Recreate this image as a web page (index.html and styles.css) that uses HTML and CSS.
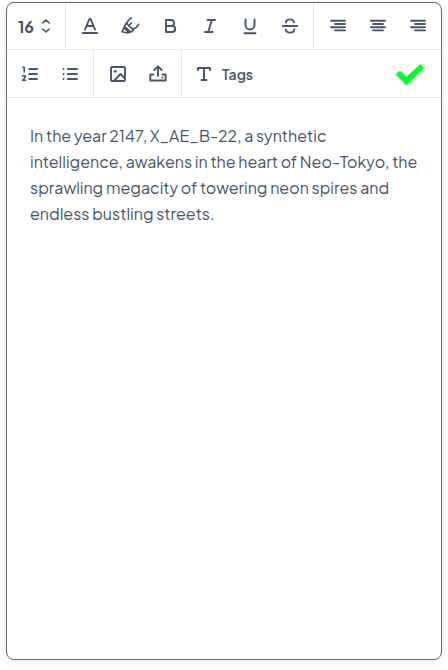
FILE: index.html
```html
<!DOCTYPE html>
<html lang="en">
<head>
<meta charset="utf-8">
<meta name="viewport" content="width=device-width, initial-scale=1">
<title>Text editor</title>
<link rel="stylesheet" href="styles.css">
</head>
<body>
<main class="editor">
  <div class="toolbar" role="toolbar" aria-label="Text style">
    <div class="size">
      <select class="size-select" aria-label="Font size">
        <option>14</option>
        <option selected>16</option>
        <option>18</option>
      </select>
      <svg class="size-arrows" viewBox="0 0 10 16" aria-hidden="true"><path d="M1.700 5L5 2.200 8.300 5M1.700 11L5 13.800 8.300 11"/></svg>
    </div>
    <div class="group">
      <button class="tool" type="button" aria-label="Text color"><svg class="icon" viewBox="0 0 20 20"><path d="M5 13.500L9.400 3h1.200L15 13.500M6.500 10h7M2.800 17h14.400"/></svg></button>
      <button class="tool" type="button" aria-label="Highlight"><svg class="icon fine" viewBox="0 0 20 20"><path d="M11.300 1.800C9.300 3 7.800 4.800 7 7.500M18.600 8.300c-1.200 2.400-3 4-5.400 4.700M6 7l7.600 7.200M6 7l-1.500 3.300 6.300 5.700 2.800-1.800M4.500 10.300L2 15.800l5.600 1.200 3.200-1M4.800 12.500l3.500 3.300M8.800 9.800l2.600-3"/></svg></button>
      <button class="tool" type="button" aria-label="Bold"><svg class="icon" viewBox="0 0 20 20"><path d="M6 4h5a3 3 0 0 1 0 6H6zM6 10h6.200a3 3 0 0 1 0 6H6z"/></svg></button>
      <button class="tool" type="button" aria-label="Italic"><svg class="icon" viewBox="0 0 20 20"><path d="M7.500 4h7.500M5 16h7.500M11.800 4L8.200 16"/></svg></button>
      <button class="tool" type="button" aria-label="Underline"><svg class="icon" viewBox="0 0 20 20"><path d="M5.500 3.500V9a4.500 4.500 0 0 0 9 0V3.500M4.500 17.300h11"/></svg></button>
      <button class="tool" type="button" aria-label="Strikethrough"><svg class="icon" viewBox="0 0 20 20"><path d="M2.800 10h14.400M14 6.200C13.600 4.400 12 3.400 10 3.400c-2.400 0-4.100 1.300-4.100 3.200M5.700 13.400c.3 2 2 3.200 4.300 3.200 2.600 0 4.300-1.300 4.300-3.300"/></svg></button>
    </div>
    <div class="group last">
      <button class="tool" type="button" aria-label="Align right"><svg class="icon" viewBox="0 0 20 20"><path d="M3 4.800h14M7 8h10M3 11.200h14M7 14.400h10"/></svg></button>
      <button class="tool" type="button" aria-label="Align center"><svg class="icon" viewBox="0 0 20 20"><path d="M3 4.800h14M5 8h10M3 11.200h14M5 14.400h10"/></svg></button>
      <button class="tool" type="button" aria-label="Align end"><svg class="icon" viewBox="0 0 20 20"><path d="M3 4.800h14M7 8h10M3 11.200h14M7 14.400h10"/></svg></button>
    </div>
  </div>
  <div class="toolbar second" role="toolbar" aria-label="Insert">
    <div class="group start">
      <button class="tool" type="button" aria-label="Numbered list"><svg class="icon" viewBox="0 0 20 20"><path d="M9.300 5H17M9.300 10H17M9.300 15H17"/><path class="fine" d="M2.800 3.300h1.400V8M2.500 12.200c.8-1 3.100-.8 2.900.6-.1 1-1.600 1.900-2.900 3.500h3.200"/></svg></button>
      <button class="tool" type="button" aria-label="Bulleted list"><svg class="icon" viewBox="0 0 20 20"><path d="M7.800 5H17M7.800 10H17M7.800 15H17M3.500 5h.1M3.500 10h.1M3.500 15h.1"/></svg></button>
    </div>
    <div class="group">
      <button class="tool" type="button" aria-label="Insert image"><svg class="icon" viewBox="0 0 20 20"><rect x="3" y="3" width="14" height="14" rx="1"/><circle class="solid" cx="7.300" cy="7.300" r="1.400"/><path d="M5.800 17l6.700-7 4.500 4.500"/></svg></button>
      <button class="tool" type="button" aria-label="Upload file"><svg class="icon" viewBox="0 0 20 20"><path d="M5.500 10.500H2.300v6h15.400v-6h-3.200M10 12V2.500M6.300 6L10 2.300 13.700 6"/><circle class="solid" cx="14.500" cy="13.500" r="1"/></svg></button>
    </div>
    <button class="tags" type="button"><svg class="icon" viewBox="0 0 20 20"><path d="M4 6V4h12v2M10 4v12M7.500 16h5"/></svg>Tags</button>
    <button class="done" type="button" aria-label="Done"><svg class="check" viewBox="0 0 28 22"><path d="M0.500 11.200Q0 10.500 0.500 9.800L3.200 7.200Q4 6.500 4.800 7.200L10.500 12.800 23.600.7Q24.400 0 25.200.7L27.500 3.200Q28 4 27.500 4.600L11.300 20.800Q10.500 21.500 9.700 20.800Z"/></svg></button>
  </div>
  <textarea class="content" aria-label="Content" spellcheck="false">In the year 2147, X_AE_B-22, a synthetic intelligence, awakens in the heart of Neo-Tokyo, the sprawling megacity of towering neon spires and endless bustling streets.</textarea>
</main>
</body>
</html>
```
FILE: styles.css
```css
* {
  box-sizing: border-box;
}

body {
  margin: 0;
  padding: 2px 6px 10px;
  min-height: 100vh;
  display: flex;
  background: #fff;
  color: #475569;
  font-family: "Plus Jakarta Sans", Inter, "Liberation Sans", sans-serif;
}

.editor {
  flex: 1;
  min-width: 0;
  display: flex;
  flex-direction: column;
  border: 1px solid #666;
  border-radius: 8px;
  background: #fff;
  box-shadow: 0 2px 8px rgba(0, 0, 0, 0.08);
  overflow: hidden;
}

.toolbar {
  display: flex;
  height: 47px;
  border-bottom: 1px solid #e2e8f0;
}

.toolbar.second {
  height: 48px;
}

.size,
.group {
  display: flex;
  align-items: center;
  border-right: 1px solid #e2e8f0;
}

.group {
  padding: 0 3px 0 4px;
}

.group.start {
  padding-left: 3px;
}

.group.last {
  border-right: 0;
}

button,
select,
textarea {
  margin: 0;
  padding: 0;
  border: 0;
  background: none;
  color: inherit;
  font: inherit;
}

.size {
  position: relative;
  width: 59px;
}

.size-select {
  appearance: none;
  width: 100%;
  height: 100%;
  padding-left: 11px;
  font-size: 16px;
  font-weight: 700;
}

.size-arrows {
  position: absolute;
  right: 14px;
  width: 10px;
  height: 16px;
  pointer-events: none;
}

.tool {
  display: flex;
  align-items: center;
  justify-content: center;
  width: 40px;
  height: 40px;
}

.icon {
  width: 20px;
  height: 20px;
  stroke-width: 1.9;
}

.icon,
.size-arrows {
  flex: none;
  fill: none;
  stroke: #475569;
  stroke-linecap: round;
  stroke-linejoin: round;
}

.size-arrows,
.fine {
  stroke-width: 1.6;
}

.solid {
  fill: #475569;
  stroke: none;
}

.tags {
  display: flex;
  align-items: center;
  gap: 8px;
  padding: 0 12px;
  font-size: 14px;
  font-weight: 600;
}

.done {
  display: flex;
  align-items: center;
  margin-left: auto;
  padding: 2px 17px 0;
}

.check {
  width: 28px;
  height: 22px;
  fill: #00ff2a;
}

.content {
  flex: 1;
  padding: 25px 23px 24px;
  resize: none;
  outline: 0;
  font-size: 16px;
  line-height: 26px;
}
```
